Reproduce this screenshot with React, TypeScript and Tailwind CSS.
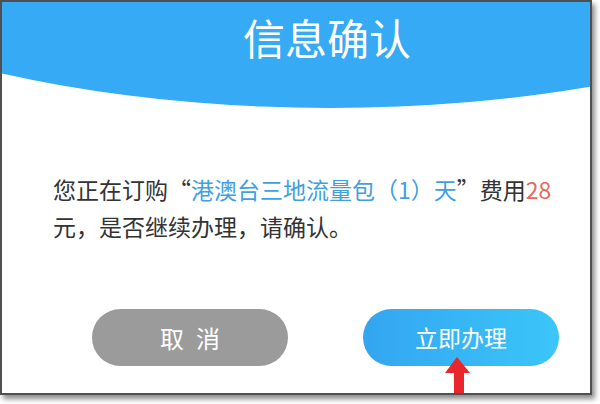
export default function App() {
  const cjk = { fontFamily: '"Noto Sans CJK SC", "Noto Sans", sans-serif' };

  return (
    <div className="w-[600px] h-[404px] bg-white">
      <div
        className="relative w-[592px] h-[395px] overflow-hidden border-2 border-[#505050] bg-white shadow-[3px_4px_5px_rgba(0,0,0,0.45)]"
        style={cjk}
      >
        {/* curved blue header */}
        <div className="absolute left-[-372px] top-[-488px] w-[1400px] h-[594px] rounded-[50%] bg-[#36aaf4]" />

        <div className="relative flex justify-center pl-[62px] pt-[14px]">
          <h1 className="text-[42px] leading-none font-normal text-white">信息确认</h1>
        </div>

        {/* message */}
        <p className="relative mt-[113px] pl-[51px] text-[23px] leading-[37px] text-[#333] whitespace-nowrap">
          您正在订购“<span className="text-[#3f9fe0]">港澳台三地流量包（1）天</span>”费用
          <span className="text-[#e46a5c]">28</span>
          <br />
          元，是否继续办理，请确认。
        </p>

        {/* buttons */}
        <div className="relative mt-[64px] flex gap-[75px] pl-[90px]">
          <button className="w-[196px] h-[57px] rounded-full bg-[#9b9b9b] text-white text-[24px] tracking-[12px] pl-[12px]">
            取消
          </button>
          <button className="w-[196px] h-[57px] rounded-full bg-gradient-to-r from-[#34a5f1] to-[#3bc6f9] text-white text-[23px]">
            立即办理
          </button>
        </div>

        {/* red arrow */}
        <svg
          className="absolute left-[443px] top-[353px]"
          width="28"
          height="42"
          viewBox="0 0 28 42"
        >
          <path d="M12 2 L25 18 L19 18 L19 42 L9 42 L9 18 L0 18 Z" fill="#e8262b" />
        </svg>
      </div>
    </div>
  );
}
